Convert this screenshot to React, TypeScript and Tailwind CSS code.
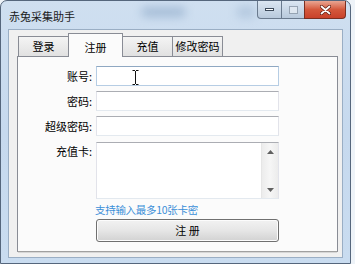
import React from "react";

const font = { fontFamily: '"Noto Sans CJK SC", "Noto Sans", sans-serif' };

function Tab({ label, active, first }: { label: string; active?: boolean; first?: boolean }) {
  if (active) {
    return (
      <div className="relative z-10 -mb-px -ml-px flex h-[24px] w-[55px] items-center justify-center border border-b-0 border-[#898c95] bg-[#fbfbfb] pt-[3px] text-[11px] text-black">
        {label}
      </div>
    );
  }
  return (
    <div
      className={`mt-[3px] flex h-[20px] w-[51px] items-center justify-center border border-b-0 border-[#898c95] bg-gradient-to-b from-[#f4f4f4] to-[#e1e1e1] text-[11px] text-black ${first ? "" : "-ml-px"}`}
    >
      {label}
    </div>
  );
}

function Field({ label, focused }: { label: string; focused?: boolean }) {
  return (
    <div className="flex items-center">
      <div className="w-[74px] text-right text-[11px] leading-[14px] text-black">{label}</div>
      <div
        className={`relative ml-[4px] h-[20px] w-[183px] border bg-white ${
          focused
            ? "border-[#b6cde4] border-t-[#8fa8c2]"
            : "border-[#e2e3ea] border-t-[#abadb3] border-b-[#e3e9ef]"
        }`}
      >
        {focused && (
          <svg className="absolute left-[35px] top-[3px]" width="7" height="15" viewBox="0 0 7 15">
            <path d="M0.5 0.5h2.5M4 0.5h2.5M3.5 1v13M0.5 14.5h2.5M4 14.5h2.5" stroke="#111" strokeWidth="1" fill="none" />
          </svg>
        )}
      </div>
    </div>
  );
}

export default function App() {
  return (
    <div className="h-[264px] w-[355px] overflow-hidden bg-[#eef3f8]" style={font}>
      <div className="relative flex h-[264px] w-[351px] flex-col rounded-t-[7px] border border-[#55667c] bg-gradient-to-b from-[#cfdff0] via-[#c6d9ee] to-[#c9dcf0]">
        {/* glass blur patches */}
        <div className="pointer-events-none absolute left-[140px] top-[6px] h-[10px] w-[45px] rounded-full bg-[#8aa6c6] opacity-60 blur-[5px]" />
        <div className="pointer-events-none absolute left-[235px] top-[5px] h-[12px] w-[20px] rounded-full bg-[#9ab3cf] opacity-50 blur-[5px]" />

        {/* title bar */}
        <div className="relative flex h-[28px] items-start justify-between">
          <div className="pl-[8px] pt-[8px] text-[11px] leading-[14px] text-[#1a1a1a]">赤兔采集助手</div>
          <div className="mr-[4px] flex">
            <div className="flex h-[18px] w-[25px] items-center justify-center rounded-bl-[4px] border border-t-0 border-[#6a7a8e] bg-gradient-to-b from-[#dbe6f2] to-[#b8c9dc]">
              <div className="h-[3px] w-[9px] border border-[#3d4a5a] bg-white" />
            </div>
            <div className="-ml-px flex h-[18px] w-[24px] items-center justify-center border border-t-0 border-[#6a7a8e] bg-gradient-to-b from-[#dbe6f2] to-[#b8c9dc]">
              <div className="h-[8px] w-[9px] border border-[#8b98a8] bg-[#e4ebf3] opacity-80" />
            </div>
            <div className="-ml-px flex h-[18px] w-[42px] items-center justify-center rounded-br-[4px] border border-t-0 border-[#7b2f21] bg-gradient-to-b from-[#e8a592] via-[#d4583c] to-[#c9412a]">
              <svg width="11" height="10" viewBox="0 0 11 10">
                <path d="M1.5 1.5l8 7M9.5 1.5l-8 7" stroke="#5a1a10" strokeWidth="3.2" strokeLinecap="round" />
                <path d="M1.5 1.5l8 7M9.5 1.5l-8 7" stroke="#ffffff" strokeWidth="1.8" strokeLinecap="round" />
              </svg>
            </div>
          </div>
        </div>

        {/* client area */}
        <div className="mx-[7px] flex h-[229px] flex-col border border-[#9aaec4] bg-[#f0f0f0] pl-[8px] pr-[4px] pt-[3px]">
          <div className="flex pl-[1px]">
            <Tab label="登录" first />
            <Tab label="注册" active />
            <Tab label="充值" />
            <Tab label="修改密码" />
          </div>
          <div className="flex h-[196px] flex-col gap-[5px] border border-[#898c95] border-b-[#a0a0a0] bg-[#fbfbfb] pt-[9px] shadow-[0_2px_0_-1px_#d6d6d6]">
            <Field label="账号:" focused />
            <Field label="密码:" />
            <Field label="超级密码:" />
            <div className="mt-[1px] flex items-start">
              <div className="w-[74px] pt-[2px] text-right text-[11px] leading-[14px] text-black">充值卡:</div>
              <div className="ml-[4px] flex h-[57px] w-[183px] border border-[#e2e3ea] border-t-[#abadb3] border-b-[#e3e9ef] bg-white">
                <div className="flex-1" />
                <div className="flex w-[17px] flex-col justify-between border-l border-[#e6e6e6] bg-gradient-to-r from-[#ececec] via-[#f6f6f6] to-[#ececec]">
                  <div className="flex h-[17px] items-center justify-center">
                    <svg width="7" height="4" viewBox="0 0 7 4"><path d="M3.5 0L7 4H0z" fill="#606060" /></svg>
                  </div>
                  <div className="flex h-[17px] items-center justify-center">
                    <svg width="7" height="4" viewBox="0 0 7 4"><path d="M0 0h7L3.5 4z" fill="#606060" /></svg>
                  </div>
                </div>
              </div>
            </div>
            <div className="-mt-[1px] ml-[77px] text-[10.5px] leading-[14px] tracking-[-0.3px] text-[#3b8fd8]">支持输入最多10张卡密</div>
            <div className="-mt-[3px] ml-[78px] flex h-[23px] w-[183px] items-center justify-center rounded-[3px] border border-[#707070] bg-gradient-to-b from-[#f2f2f2] via-[#e6e6e6] to-[#d2d2d2] text-[11px] text-black shadow-[inset_0_0_0_1px_#fcfcfc]">
              注 册
            </div>
          </div>
        </div>
      </div>
    </div>
  );
}
